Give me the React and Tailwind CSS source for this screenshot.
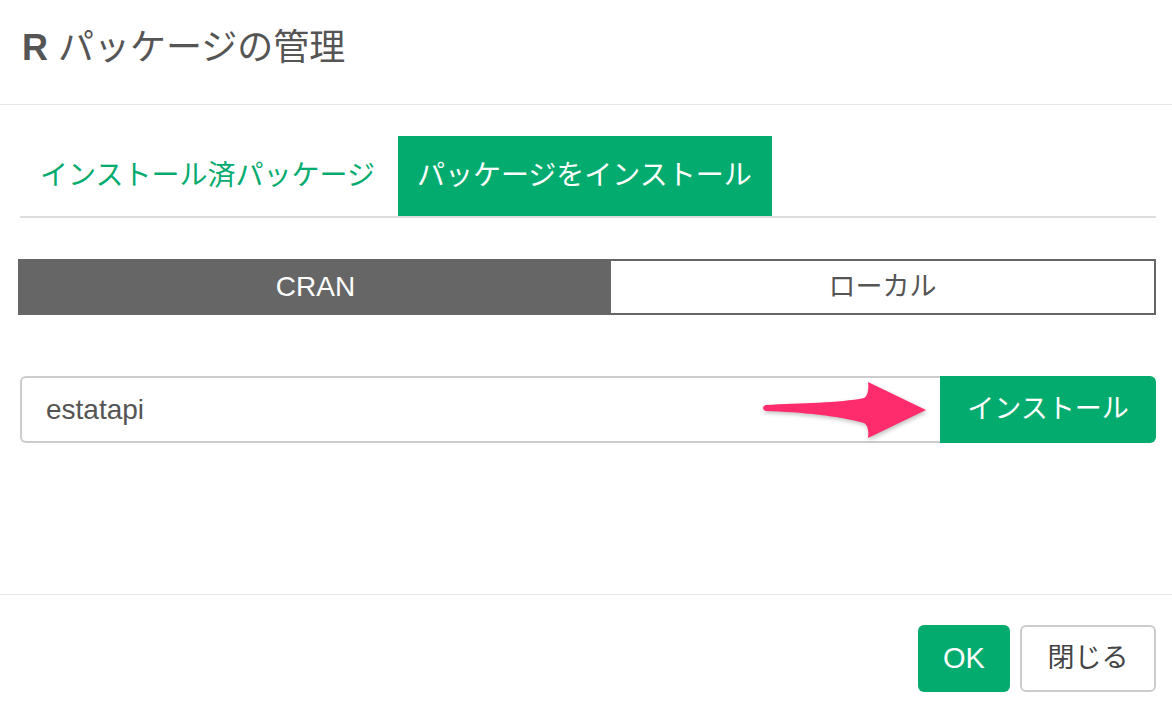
import React, { useState } from 'react';

const font = { fontFamily: '"Liberation Sans", "Noto Sans CJK JP", sans-serif' };

const Arrow = () => (
  <svg
    className="absolute left-[760px] top-[376px] pointer-events-none"
    width="172"
    height="68"
    viewBox="0 0 172 68"
    style={{ filter: 'drop-shadow(1px 2px 2px rgba(0,0,0,0.25))' }}
  >
    <path
      d="M6 29 C40 27 80 27 104 22 C108 20 109 12 108 6 L166 34 L108 62 C109 56 108 49 104 47 C80 40 40 36 6 35 C2 34 2 30 6 29 Z"
      fill="#ff2c6d"
    />
  </svg>
);

export default function App() {
  const [tab, setTab] = useState('install');
  const [source, setSource] = useState('cran');
  const [pkg, setPkg] = useState('estatapi');

  return (
    <div className="relative w-[1172px] h-[716px] bg-white overflow-hidden" style={font}>
      {/* Header */}
      <div className="h-[105px] border-b border-[#e5e5e5] pl-[22px] pt-[27px]">
        <h1 className="text-[36px] leading-[42px] text-[#555]">
          <span className="font-bold">R</span> パッケージの管理
        </h1>
      </div>

      {/* Body */}
      <div className="h-[490px] pl-[20px] pr-[16px] pt-[31px] border-b border-[#e5e5e5]">
        <div className="flex border-b-2 border-[#dddddd]">
          <button
            onClick={() => setTab('installed')}
            className={`h-[80px] pl-[20px] pr-[23px] text-[28px] ${tab === 'installed' ? 'bg-[#03ab6f] text-white' : 'text-[#03ab6f]'}`}
          >
            インストール済パッケージ
          </button>
          <button
            onClick={() => setTab('install')}
            className={`h-[80px] pl-[19px] pr-[20px] text-[28px] ${tab === 'install' ? 'bg-[#03ab6f] text-white' : 'text-[#03ab6f]'}`}
          >
            パッケージをインストール
          </button>
        </div>

        <div className="mt-[41px] -ml-[2px] flex h-[56px] border-2 border-[#666]">
          <button
            onClick={() => setSource('cran')}
            className={`w-[591px] text-[28px] ${source === 'cran' ? 'bg-[#666] text-white' : 'bg-white text-[#555]'}`}
          >
            CRAN
          </button>
          <button
            onClick={() => setSource('local')}
            className={`flex-1 text-[27px] ${source === 'local' ? 'bg-[#666] text-white' : 'bg-white text-[#555]'}`}
          >
            ローカル
          </button>
        </div>

        <div className="mt-[61px] flex h-[67px]">
          <input
            value={pkg}
            onChange={(e) => setPkg(e.target.value)}
            className="flex-1 min-w-0 border-2 border-r-0 border-[#cccccc] rounded-l-[6px] px-[24px] text-[28px] text-[#555] outline-none"
            style={font}
          />
          <button className="w-[216px] bg-[#03ab6f] text-white text-[27px] rounded-r-[6px]">
            インストール
          </button>
        </div>
      </div>

      {/* Footer */}
      <div className="flex justify-end gap-[10px] pr-[16px] pt-[30px]">
        <button className="w-[92px] h-[67px] rounded-[6px] bg-[#03ab6f] text-white text-[29px]">
          OK
        </button>
        <button className="w-[136px] h-[67px] rounded-[6px] border-2 border-[#cccccc] bg-white text-[#444] text-[27px]">
          閉じる
        </button>
      </div>

      <Arrow />
    </div>
  );
}
